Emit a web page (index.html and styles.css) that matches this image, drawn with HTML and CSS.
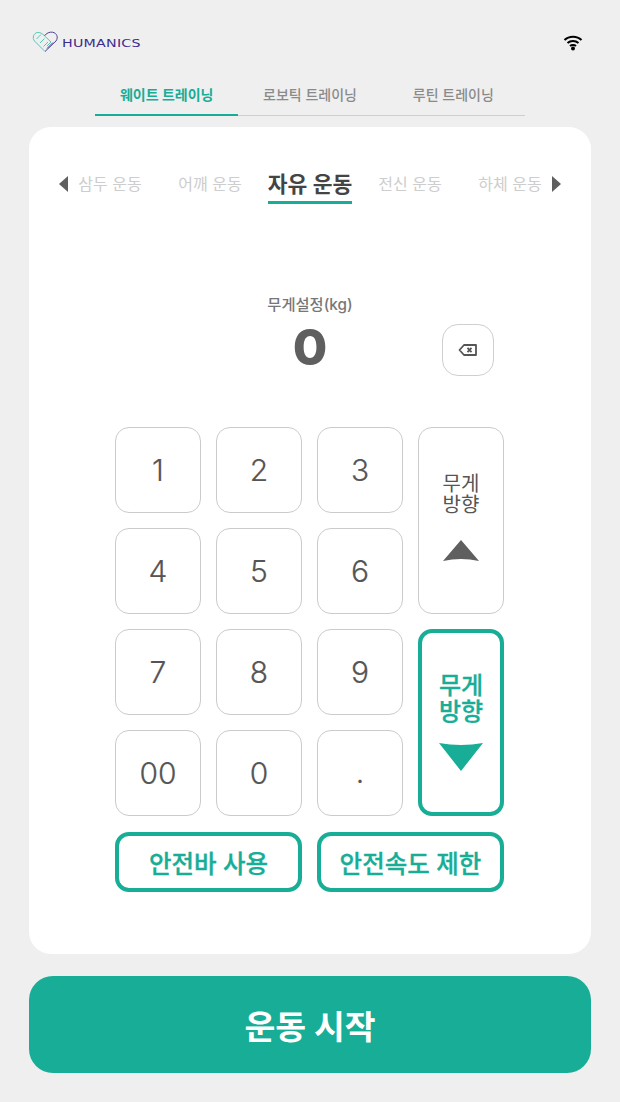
FILE: index.html
```html
<!DOCTYPE html>
<html lang="ko">
<head>
    <meta charset="UTF-8">
    <meta name="viewport" content="width=device-width, initial-scale=1.0">
    <title>웨이트 트레이닝</title>
    <link rel="stylesheet" href="styles.css">
</head>
<body>

<header class="top-bar">
    <div class="logo">
        <svg class="logo-mark" width="28" height="22" viewBox="0 0 28 22" fill="none">
            <path d="M13 20.500 L2.500 10 C0 7 1.500 2 5.500 1.500 C8.500 1.200 10.500 2.800 12.500 4.800 L19 11 L15 15" stroke="#45c2b0" stroke-width="0.900"/>
            <path d="M4.500 8 L9 3.500 M8 12 L12.500 7.500 M11.500 15.500 L16 11" stroke="#45c2b0" stroke-width="0.900"/>
            <path d="M12.500 4.800 C14.500 2 17.500 0.800 20.500 1.200 C25 2 26.500 6.500 24 10 L13 20.500" stroke="#3d2c8d" stroke-width="0.900"/>
            <path d="M15 17.500 L21 11.500" stroke="#3d2c8d" stroke-width="0.900"/>
        </svg>
        <span class="logo-text">HUMANICS</span>
    </div>
    <svg class="wifi" width="20" height="17" viewBox="0 0 20 17" fill="none" stroke="#000" stroke-width="2">
        <path d="M1.500 6 C6 1.500 14 1.500 18.500 6"/>
        <path d="M4.500 9 C7.500 6.200 12.500 6.200 15.500 9"/>
        <path d="M7 12 C8.500 10.700 11.500 10.700 13 12"/>
        <circle cx="10" cy="14.500" r="2" fill="#000" stroke="none"/>
    </svg>
</header>

<nav class="tabs">
    <div class="tab tab-active">웨이트 트레이닝</div>
    <div class="tab">로보틱 트레이닝</div>
    <div class="tab">루틴 트레이닝</div>
</nav>

<main class="card">
    <div class="sub-tabs">
        <span class="arrow arrow-left"></span>
        <div class="sub-tab">삼두 운동</div>
        <div class="sub-tab">어깨 운동</div>
        <div class="sub-tab sub-tab-active"><span>자유 운동</span></div>
        <div class="sub-tab">전신 운동</div>
        <div class="sub-tab">하체 운동</div>
        <span class="arrow arrow-right"></span>
    </div>

    <div class="weight">
        <div class="weight-value">
            <div class="weight-label">무게설정(kg)</div>
            <div class="weight-number">0</div>
        </div>
        <button class="backspace" type="button">
            <svg width="20" height="14" viewBox="0 0 20 14" fill="none" stroke="#555" stroke-width="1.800">
                <path d="M6 2 H18 V12 H6 L1.500 7 Z" stroke-linejoin="round"/>
                <path d="M9.500 4.800 L13.500 9.200 M13.500 4.800 L9.500 9.200"/>
            </svg>
        </button>
    </div>

    <div class="keypad">
        <button class="key" type="button">1</button>
        <button class="key" type="button">2</button>
        <button class="key" type="button">3</button>
        <button class="key dir-up" type="button">
            <span class="dir-label">무게<br>방향</span>
            <svg class="tri" width="36" height="21" viewBox="0 0 36 21">
                <path d="M18 0 L36 21 Q18 17 0 21 Z" fill="#5f5f5f"/>
            </svg>
        </button>
        <button class="key" type="button">4</button>
        <button class="key" type="button">5</button>
        <button class="key" type="button">6</button>
        <button class="key" type="button">7</button>
        <button class="key" type="button">8</button>
        <button class="key" type="button">9</button>
        <button class="key dir-down" type="button">
            <span class="dir-label">무게<br>방향</span>
            <svg class="tri" width="44" height="28" viewBox="0 0 44 28">
                <path d="M0 0 Q22 4 44 0 L22 28 Z" fill="#17ad96"/>
            </svg>
        </button>
        <button class="key" type="button">00</button>
        <button class="key" type="button">0</button>
        <button class="key key-dot" type="button">.</button>
    </div>

    <div class="options">
        <button class="option" type="button">안전바 사용</button>
        <button class="option" type="button">안전속도 제한</button>
    </div>
</main>

<button class="start" type="button">운동 시작</button>

</body>
</html>
```

FILE: styles.css
```css
* {
    box-sizing: border-box;
}

body {
    font-family: Inter, "Noto Sans CJK KR", sans-serif;
    background-color: #efefef;
    margin: 0;
    padding: 0 29px;
    height: 1102px;
    overflow: hidden;
}

button {
    font-family: inherit;
    background-color: #fff;
    padding: 0;
    cursor: pointer;
}

.top-bar {
    display: flex;
    justify-content: space-between;
    align-items: center;
    height: 84px;
    padding: 0 8px 0 3px;
}

.logo {
    display: flex;
    align-items: center;
    gap: 2px;
}

.logo-text {
    font-family: "DejaVu Sans", sans-serif;
    font-size: 11px;
    letter-spacing: 0.2px;
    color: #3d2c8d;
    padding-top: 2px;
    transform: scaleX(1.29);
    transform-origin: left;
}

.tabs {
    display: flex;
    width: 430px;
    margin: 0 0 11px 66px;
    border-bottom: 1px solid #cfcfcf;
}

.tab {
    flex: 1;
    height: 32px;
    margin-bottom: -1px;
    padding-top: 1px;
    text-align: center;
    font-size: 14px;
    font-weight: 500;
    line-height: 20px;
    color: #8a8a8a;
}

.tab-active {
    color: #17ad96;
    font-weight: 700;
    border-bottom: 2px solid #17ad96;
}

.card {
    background-color: #fff;
    border-radius: 22px;
    height: 827px;
    padding-top: 41px;
}

.sub-tabs {
    position: relative;
    display: flex;
    justify-content: center;
    height: 36px;
}

.sub-tab {
    width: 100px;
    text-align: center;
    font-size: 16px;
    font-weight: 400;
    line-height: 32px;
    color: #cdcdcd;
    white-space: nowrap;
}

.sub-tab-active {
    font-size: 21.500px;
    font-weight: 600;
    color: #444;
}

.sub-tab-active span {
    display: inline-block;
    height: 36px;
    border-bottom: 3px solid #17ad96;
}

.arrow {
    position: absolute;
    top: 8px;
    width: 0;
    height: 0;
    border-top: 8px solid transparent;
    border-bottom: 8px solid transparent;
}

.arrow-left {
    left: 30px;
    border-right: 9px solid #5f5f5f;
}

.arrow-right {
    right: 30px;
    border-left: 9px solid #5f5f5f;
}

.weight {
    position: relative;
    height: 90px;
    margin-top: 90px;
}

.weight-value {
    text-align: center;
}

.weight-label {
    font-size: 15.300px;
    font-weight: 500;
    line-height: 21px;
    margin-bottom: 4px;
    color: #777;
}

.weight-number {
    font-size: 50px;
    font-weight: 800;
    line-height: 56px;
    color: #5f5f5f;
}

.backspace {
    position: absolute;
    top: 30px;
    left: 413px;
    display: flex;
    align-items: center;
    justify-content: center;
    width: 52px;
    height: 52px;
    border: 1px solid #cfcfcf;
    border-radius: 16px;
}

.keypad {
    display: grid;
    grid-template-columns: repeat(4, 86px);
    grid-template-rows: repeat(4, 86px);
    gap: 15px;
    margin: 43px 0 0 86px;
}

.key {
    border: 1px solid #cbcbcb;
    border-radius: 14px;
    font-size: 30px;
    font-weight: 300;
    -webkit-text-stroke: 0.2px #555;
    color: #555;
}

.key-dot {
    padding-bottom: 3px;
}

.dir-up,
.dir-down {
    display: flex;
    flex-direction: column;
    align-items: center;
    justify-content: center;
    grid-column: 4;
}

.dir-up {
    grid-row: 1 / span 2;
    font-size: 20px;
    font-weight: 400;
    line-height: 21px;
    -webkit-text-stroke: 0;
    padding-bottom: 7px;
}

.dir-down {
    grid-row: 3 / span 2;
    font-size: 24px;
    font-weight: 500;
    line-height: 26px;
    -webkit-text-stroke: 0.3px #17ad96;
    color: #17ad96;
    border: 4px solid #17ad96;
    padding-bottom: 1px;
}

.dir-label {
    display: block;
}

.tri {
    display: block;
    margin-top: 24px;
}

.dir-down .tri {
    margin-top: 18px;
}

.options {
    display: flex;
    gap: 15px;
    margin: 16px 0 0 86px;
}

.option {
    width: 187px;
    height: 60px;
    border: 4px solid #17ad96;
    border-radius: 14px;
    font-size: 24.500px;
    font-weight: 500;
    -webkit-text-stroke: 0.3px #17ad96;
    color: #17ad96;
}

.start {
    display: block;
    width: 100%;
    height: 97px;
    margin-top: 22px;
    background-color: #17ad96;
    border: none;
    border-radius: 24px;
    font-size: 33.500px;
    font-weight: 700;
    color: #fff;
}
```
